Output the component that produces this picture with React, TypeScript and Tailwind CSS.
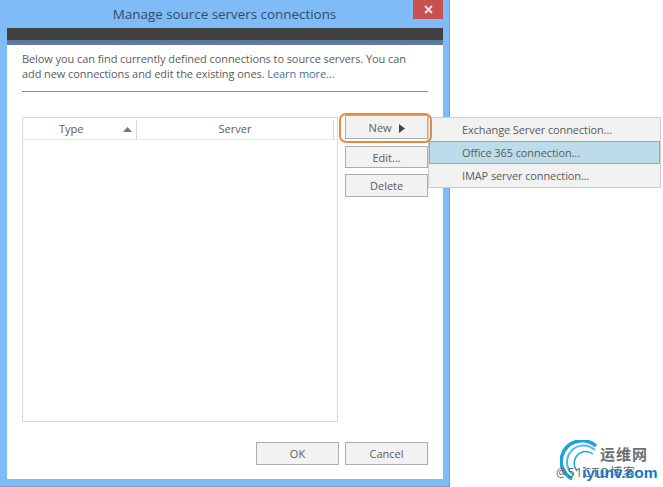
import React from "react";

const font = { fontFamily: '"Open Sans", "Noto Sans CJK SC", sans-serif' };

const Btn = ({ label, className = "" }: { label: React.ReactNode; className?: string }) => (
  <button className={`flex items-center justify-center border border-[#adadad] bg-[#f2f2f2] pt-[2px] text-[11px] text-[#5c5c5c] ${className}`}>
    {label}
  </button>
);

const menuItems = ["Exchange Server connection...", "Office 365 connection...", "IMAP server connection..."];

export default function App() {
  return (
    <div className="relative h-[487px] w-[663px] overflow-hidden bg-white" style={font}>
      {/* Window */}
      <div className="flex h-[487px] w-[450px] flex-col border-r border-b border-[#6ea3d6] bg-[#7fbcf7]">
        {/* Title bar */}
        <div className="flex h-[28px] shrink-0 items-start">
          <div className="flex h-[28px] flex-1 items-center justify-center pl-[36px] pt-[1px] text-[13.4px] text-[#2f4a6a]">
            Manage source servers connections
          </div>
          <div className="mr-[6px] flex h-[19px] w-[30px] items-center justify-center bg-[#c75050]">
            <svg width="9" height="9" viewBox="0 0 9 9">
              <path d="M1 1l7 7M8 1l-7 7" stroke="#f4e4e4" strokeWidth="1.8" />
            </svg>
          </div>
        </div>

        {/* Body */}
        <div className="mb-[7px] ml-[7px] mr-[6px] flex flex-1 flex-col bg-white">
          <div className="h-[12px] bg-[#414141]" />
          <div className="h-[5px] bg-[#5d7a9c]" />

          <div className="flex flex-1 flex-col px-[15px]">
            <div className="pt-[6px] text-[11px] leading-[15px] tracking-[-0.08px] text-[#5c5c5c]">
              <p className="whitespace-nowrap">
                Below you can find currently defined connections to source servers. You can
              </p>
              <p className="whitespace-nowrap">
                add new connections and edit the existing ones.{" "}
                <span className="text-[#3f74a3]">Learn more...</span>
              </p>
            </div>
            <div className="mt-[10px] h-px bg-[#8a8f94]" />

            <div className="mt-[25px] flex gap-[7px]">
              {/* Table */}
              <div className="h-[305px] w-[317px] border border-[#d9d9d9]">
                <div className="flex h-[22px] border-b border-[#e6e6e6] pt-[2px] text-[11px] text-[#5c5c5c]">
                  <div className="relative flex w-[114px] items-center border-r border-[#d9d9d9] pl-[36px]">
                    Type
                    <svg className="absolute right-[4px] top-[7px]" width="9" height="5" viewBox="0 0 9 5">
                      <path d="M4.5 0L9 5H0z" fill="#777" />
                    </svg>
                  </div>
                  <div className="flex w-[197px] items-center justify-center border-r border-[#d9d9d9]">Server</div>
                </div>
              </div>

              {/* Side buttons */}
              <div className="-mt-[2px] flex w-[83px] flex-col">
                <Btn
                  className="h-[24px] gap-[7px]"
                  label={
                    <>
                      New
                      <svg width="6" height="9" viewBox="0 0 6 9">
                        <path d="M0 0l6 4.5L0 9z" fill="#444" />
                      </svg>
                    </>
                  }
                />
                <Btn className="mt-[7px] h-[22px]" label="Edit..." />
                <Btn className="mt-[6px] h-[23px]" label="Delete" />
              </div>
            </div>

            <div className="mb-[14px] mt-auto flex justify-end gap-[6px]">
              <Btn className="h-[23px] w-[83px]" label="OK" />
              <Btn className="h-[23px] w-[83px]" label="Cancel" />
            </div>
          </div>
        </div>
      </div>

      {/* Flyout menu */}
      <div className="absolute left-[428px] top-[117px] w-[233px] border border-[#cfcfcf] bg-[#f1f1f1] text-[11px] tracking-[-0.1px] text-[#5c5c5c]">
        {menuItems.map((item, i) => (
          <div
            key={item}
            className={
              i === 1
                ? "flex h-[23px] items-center border border-[#7db4c4] bg-[#bcdcea] pl-[32px] pt-[1px]"
                : "flex h-[23px] items-center pl-[33px] pt-[1px]"
            }
          >
            {item}
          </div>
        ))}
      </div>

      {/* Highlight ring round New */}
      <div className="absolute left-[339px] top-[113px] h-[30px] w-[93px] rounded-[7px] border-2 border-[#e8883f]" />

      {/* Watermark */}
      <div className="absolute left-[556px] top-[440px] h-[47px] w-[107px]">
        <svg className="absolute left-[4px] top-0" width="40" height="41" viewBox="0 0 40 41" fill="none">
          <path d="M36 6C27 -2 11 -1 4 11c-6 11-2 22 8 28" stroke="#1da1e0" strokeWidth="3.5" />
          <path d="M35 10C27 3 15 4 9 14c-4 8-2 15 4 21" stroke="#4bbbe8" strokeWidth="2" />
          <path d="M33 14c-6-4-13-3-17 3-3 5-2 10 1 14" stroke="#1da1e0" strokeWidth="1.5" />
        </svg>
        <span className="absolute left-[44px] top-[5px] text-[15px] font-bold leading-[18px] tracking-[1px] text-[#6b6f73]">
          运维网
        </span>
        <span className="absolute left-[0px] top-[25px] whitespace-nowrap text-[12px] leading-[16px] tracking-[1px] text-[#666]">
          @51CTO博客
        </span>
        <span
          className="absolute left-[26px] top-[23px] text-[15.5px] font-bold leading-[20px] text-[#1479c9]"
          style={{ fontFamily: '"Liberation Sans", sans-serif' }}
        >
          iyunv.com
        </span>
      </div>
    </div>
  );
}
